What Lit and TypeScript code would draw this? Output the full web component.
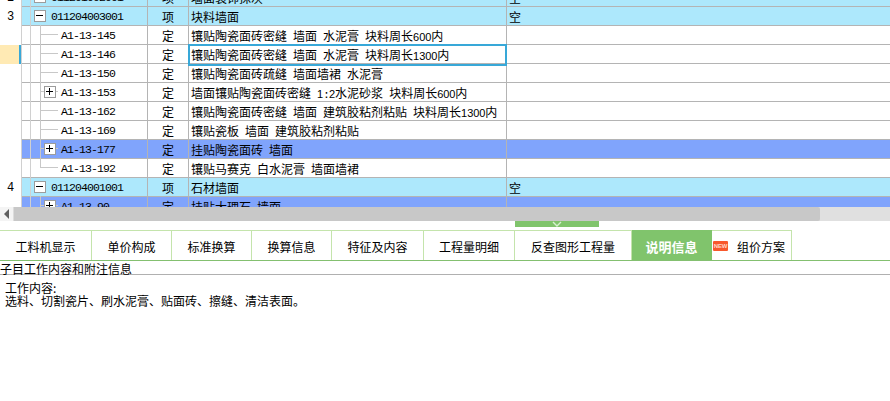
import { LitElement, html, css, nothing } from "lit";
import { customElement } from "lit/decorators.js";

type Row = { no?: string; kind: "item" | "sub"; tone?: "cyan" | "blue" | "active"; box?: "+" | "-"; code: string; unit: string; name: string; last?: string; tree?: "mid" | "end" };

const rows: Row[] = [
  { no: "2", kind: "item", tone: "cyan", box: "-", code: "011201002001", unit: "项", name: "墙面装饰抹灰", last: "空" },
  { no: "3", kind: "item", tone: "cyan", box: "-", code: "011204003001", unit: "项", name: "块料墙面", last: "空" },
  { kind: "sub", code: "A1-13-145", unit: "定", name: "镶贴陶瓷面砖密缝 墙面 水泥膏 块料周长600内", tree: "mid" },
  { kind: "sub", tone: "active", code: "A1-13-146", unit: "定", name: "镶贴陶瓷面砖密缝 墙面 水泥膏 块料周长1300内", tree: "mid" },
  { kind: "sub", code: "A1-13-150", unit: "定", name: "镶贴陶瓷面砖疏缝 墙面墙裙 水泥膏", tree: "mid" },
  { kind: "sub", box: "+", code: "A1-13-153", unit: "定", name: "墙面镶贴陶瓷面砖密缝 1:2水泥砂浆 块料周长600内", tree: "mid" },
  { kind: "sub", code: "A1-13-162", unit: "定", name: "镶贴陶瓷面砖密缝 墙面 建筑胶粘剂粘贴 块料周长1300内", tree: "mid" },
  { kind: "sub", code: "A1-13-169", unit: "定", name: "镶贴瓷板 墙面 建筑胶粘剂粘贴", tree: "mid" },
  { kind: "sub", tone: "blue", box: "+", code: "A1-13-177", unit: "定", name: "挂贴陶瓷面砖 墙面", tree: "mid" },
  { kind: "sub", code: "A1-13-192", unit: "定", name: "镶贴马赛克 白水泥膏 墙面墙裙", tree: "end" },
  { no: "4", kind: "item", tone: "cyan", box: "-", code: "011204001001", unit: "项", name: "石材墙面", last: "空" },
  { kind: "sub", tone: "blue", box: "+", code: "A1-13-90", unit: "定", name: "挂贴大理石 墙面", tree: "mid" },
];

const tabs = ["工料机显示", "单价构成", "标准换算", "换算信息", "特征及内容", "工程量明细", "反查图形工程量", "说明信息", "组价方案"];
const tabWidths = [92, 80, 80, 80, 92, 91, 117, 80, 80];

/* Latin runs in the reference are half-width (6px per glyph), CJK 12px. */
function mixed(text: string) {
  return text.split(/(\d+|[\x20-\x7e])/).map((part, i) => {
    if (!(i % 2)) return part;
    return /\d/.test(part) ? html`<span class="dg">${part}</span>` : html`<span class="hw">${part}</span>`;
  });
}

@customElement("app-root")
export class AppRoot extends LitElement {
  static styles = css`
    :host { display: block; width: 890px; height: 401px; overflow: hidden; background: #fff; font: 12px/14px "Noto Sans CJK SC", sans-serif; color: #000; }
    .hw { font-family: "Liberation Mono", monospace; font-size: 11.5px; letter-spacing: -0.9px; white-space: pre; }
    .dg { font-family: "Liberation Sans", sans-serif; font-size: 11px; letter-spacing: -0.1px; }
    .grid { height: 207px; overflow: hidden; }
    .rows { margin-top: -12px; }
    .row { display: grid; grid-template-columns: 21px 1px 8px 1px 116px 1px 40px 1px 317px 1px 1fr; height: 18px; border-bottom: 1px solid #b4b4b4; background: #fff; line-height: 20px; }
    .row.cyan { background: #ade8fc; }
    .row.blue { background: #80a4fc; }
    .v { background: #b4b4b4; }
    .v.light { background: #d0d0d0; }
    .no { background: #fff; text-align: center; font-family: "Liberation Mono", monospace; }
    .no.active { background: #ffeab4; border-right: 2px solid #38a8d8; box-sizing: border-box; }
    .tree { position: relative; display: flex; align-items: center; height: 18px; font-family: "Liberation Mono", monospace; font-size: 11.5px; letter-spacing: -0.9px; }
    .item .tree { padding-left: 3px; }
    .sub .tree { padding-left: 13px; }
    .box { box-sizing: border-box; width: 12px; height: 12px; border: 1px solid #9c9c9c; background: #fff; margin-right: 5px; display: flex; align-items: center; justify-content: center; flex: none; position: relative; z-index: 1; }
    .nobox { width: 12px; margin-right: 5px; flex: none; }
    .code { position: relative; z-index: 1; padding-top: 2px; }
    .line-v { position: absolute; left: 9px; top: -1px; bottom: -1px; width: 1px; background: #c8c8c8; }
    .line-v.end { bottom: 50%; }
    .line-h { position: absolute; left: 10px; width: 17px; top: 8px; height: 1px; background: #c8c8c8; }
    .unit { text-align: center; }
    .name { padding-left: 2px; white-space: nowrap; overflow: hidden; position: relative; }
    .name.cursor { outline: 2px solid #38a8d8; outline-offset: -1px; z-index: 2; }
    .last { padding-left: 2px; }

    .hbar { display: flex; height: 14px; background: #e0e0e0; }
    .arrow { width: 14px; background: #f4f4f4; display: flex; align-items: center; justify-content: center; border-right: 1px solid #dcdcdc; box-sizing: border-box; }
    .thumb { width: 806px; background: #c8c8c8; border-radius: 0 2px 2px 0; }
    .split { height: 9px; display: flex; justify-content: center; }
    .handle { width: 84px; height: 6px; background: #80c46c; margin-left: 224px; display: flex; justify-content: center; }

    .tabs { display: flex; height: 31px; box-sizing: border-box; border-bottom: 1px solid #84c070; }
    .tab { box-sizing: border-box; border-top: 1px solid #c4e4ac; border-right: 1px solid #c4e4ac; display: flex; align-items: center; justify-content: center; height: 30px; padding-top: 2px; flex: none; }
    .tab.on { background: #80c46c; color: #fff; font-weight: 700; font-size: 13px; border-color: #80c46c; }
    .tab.new { gap: 9px; justify-content: flex-start; padding-left: 1px; }
    .badge { width: 15px; height: 10px; background: #f8582c; color: #ffd8c8; font: 700 6px/10px "Liberation Sans", sans-serif; text-align: center; margin-top: -2px; border-radius: 1px; letter-spacing: -0.2px; }
    .caption { height: 13px; line-height: 15px; border-bottom: 1px solid #b0b0b0; white-space: nowrap; }
    .body { padding: 6px 0 0 5px; line-height: 13px; }
  `;

  private box(kind: "+" | "-") {
    return html`<span class="box"><svg width="8" height="8" viewBox="0 0 8 8"><path d="M0 3.5H7${kind === "+" ? "M3.5 0V7" : ""}" stroke="#000" fill="none"/></svg></span>`;
  }

  render() {
    return html`
      <div class="grid"><div class="rows">
        ${rows.map(
          (r) => html`<div class="row ${r.kind} ${r.tone === "active" ? "" : r.tone ?? ""}">
            <div class="no ${r.tone === "active" ? "active" : ""}">${r.no ?? ""}</div>
            <div class="v light"></div>
            <div></div>
            <div class="v light"></div>
            <div class="tree">
              ${r.tree ? html`<i class="line-v ${r.tree === "end" ? "end" : ""}"></i><i class="line-h"></i>` : nothing}
              ${r.box ? this.box(r.box) : html`<span class="nobox"></span>`}
              <span class="code">${r.code}</span>
            </div>
            <div class="v"></div>
            <div class="unit">${r.unit}</div>
            <div class="v"></div>
            <div class="name ${r.tone === "active" ? "cursor" : ""}">${mixed(r.name)}</div>
            <div class="v"></div>
            <div class="last">${r.last ?? ""}</div>
          </div>`
        )}
      </div></div>
      <div class="hbar">
        <div class="arrow"><svg width="6" height="10" viewBox="0 0 6 10"><path d="M5 0V10L0 5Z" fill="#606060"/></svg></div>
        <div class="thumb"></div>
      </div>
      <div class="split"><div class="handle"><svg width="10" height="6" viewBox="0 0 10 6"><path d="M1 1L5 5L9 1" stroke="#d8f0d0" fill="none" stroke-width="1.4"/></svg></div></div>
      <div class="tabs">
        ${tabs.map(
          (t, i) => html`<div class="tab ${t === "说明信息" ? "on" : ""} ${t === "组价方案" ? "new" : ""}" style="width:${tabWidths[i]}px">
            ${t === "组价方案" ? html`<span class="badge">NEW</span>` : nothing}
            <span>${t}</span>
          </div>`
        )}
      </div>
      <div class="caption">子目工作内容和附注信息</div>
      <div class="body">
        <div>工作内容:</div>
        <div>选料、切割瓷片、刷水泥膏、贴面砖、擦缝、清洁表面。</div>
      </div>
    `;
  }
}
